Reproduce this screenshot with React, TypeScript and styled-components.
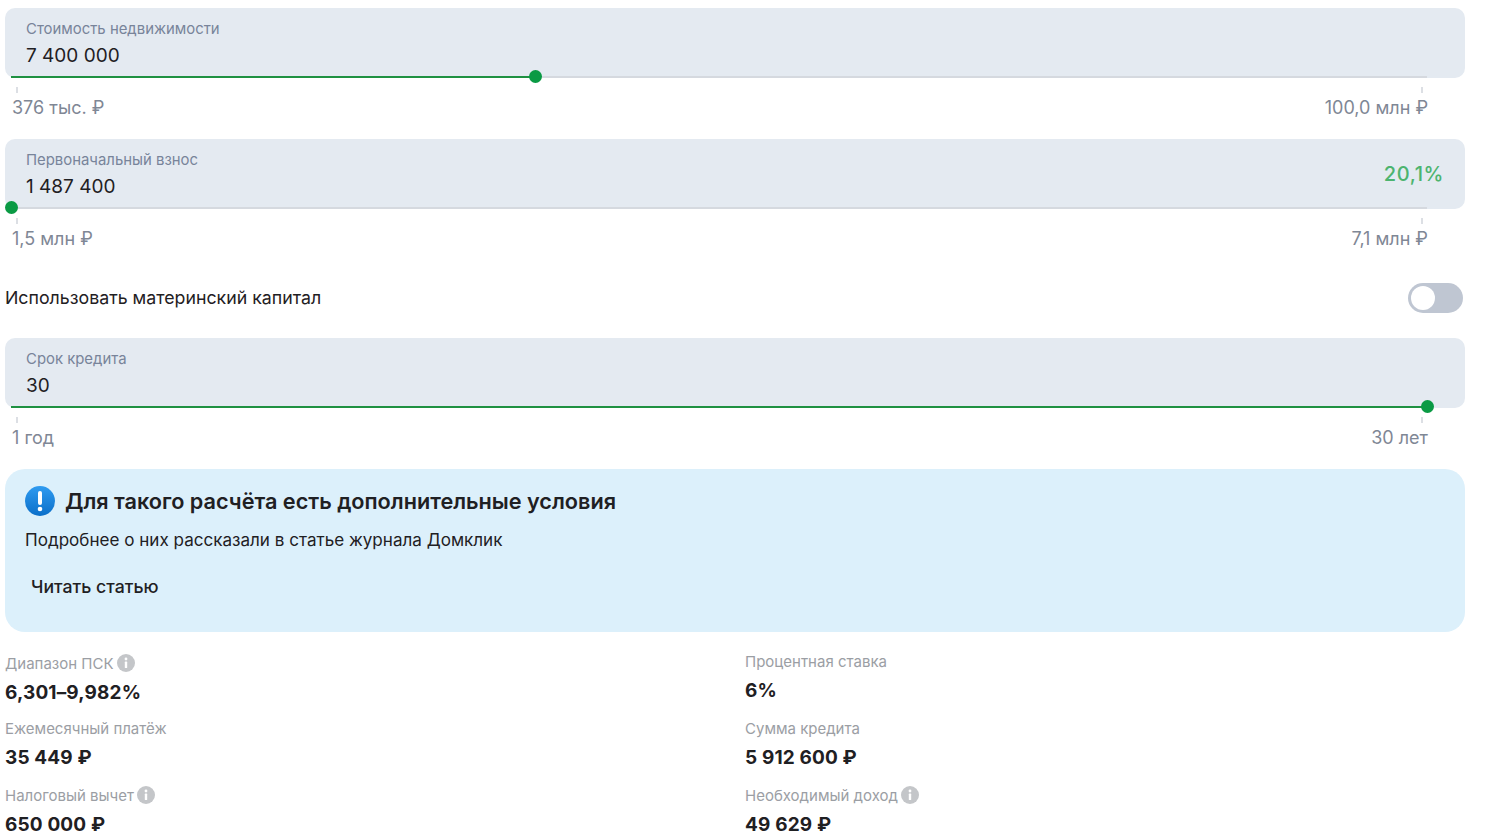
import React from "react";
import styled, { createGlobalStyle } from "styled-components";

const Global = createGlobalStyle`
  html, body { margin: 0; padding: 0; background: #fff; height: 840px; overflow: hidden; }
  body { font-family: Inter, "Noto Sans", sans-serif; color: #1f2023; }
`;

const Page = styled.div`
  width: 1460px;
  padding: 8px 0 0 5px;
  display: flex;
  flex-direction: column;
`;

const SliderBlock = styled.div`
  height: 131px;
  display: flex;
  flex-direction: column;
`;

const Field = styled.div`
  position: relative;
  height: 70px;
  box-sizing: border-box;
  padding: 12px 21px 0;
  background: #e4eaf1;
  border-radius: 10px;
  display: flex;
  justify-content: space-between;
`;

const FieldText = styled.div`
  display: flex;
  flex-direction: column;
`;

const FieldLabel = styled.div`
  font-size: 14.9px;
  line-height: 18px;
  color: #78849a;
`;

const FieldValue = styled.div`
  font-size: 19px;
  line-height: 26px;
  margin-top: 5px;
  color: #1f2023;
`;

const Percent = styled.div`
  align-self: center;
  margin-top: -12px;
  font-size: 20px;
  font-weight: 500;
  letter-spacing: 0.6px;
  color: #4cb46f;
`;

const Track = styled.div`
  position: absolute;
  left: 6px;
  width: 1416px;
  bottom: 0;
  height: 2px;
  background: #d5d9df;
`;

const TrackFill = styled.div`
  height: 100%;
  background: #1f9142;
`;

const Thumb = styled.div`
  position: absolute;
  top: -6.5px;
  width: 13px;
  height: 13px;
  margin-left: -6.5px;
  box-sizing: border-box;
  border-radius: 50%;
  background: #0a9a44;
`;

const Scale = styled.div`
  width: 1423px;
  margin-top: 9px;
  padding-left: 7px;
  box-sizing: border-box;
  display: flex;
  justify-content: space-between;
`;

const ScaleMark = styled.div<{ $end?: boolean }>`
  display: flex;
  flex-direction: column;
  align-items: ${(p) => (p.$end ? "flex-end" : "flex-start")};
`;

const Tick = styled.div<{ $end?: boolean }>`
  width: 2px;
  height: 6px;
  background: #dcdfe4;
  margin: ${(p) => (p.$end ? "0 5px 0 0" : "0 0 0 4px")};
`;

const ScaleText = styled.div`
  margin-top: 4px;
  font-size: 18px;
  line-height: 22px;
  color: #7f8795;
`;

const ToggleRow = styled.div`
  height: 68px;
  padding: 0 2px 0 0;
  display: flex;
  align-items: flex-start;
  justify-content: space-between;
`;

const ToggleLabel = styled.div`
  margin-top: 17px;
  font-size: 17.75px;
  line-height: 22px;
  color: #1f2023;
`;

const Toggle = styled.div`
  margin-top: 13px;
  width: 55px;
  height: 30px;
  box-sizing: border-box;
  padding: 3px;
  border-radius: 15px;
  background: #bfc6d2;
`;

const Knob = styled.div`
  width: 24px;
  height: 24px;
  border-radius: 50%;
  background: #fff;
`;

const Banner = styled.div`
  height: 163px;
  box-sizing: border-box;
  padding: 16px 20px 0;
  background: #dcf0fb;
  border-radius: 20px;
  display: flex;
  flex-direction: column;
`;

const BannerHead = styled.div`
  display: flex;
  align-items: center;
  gap: 10px;
  height: 32px;
`;

const BannerTitle = styled.div`
  font-size: 21.65px;
  font-weight: 600;
  line-height: 30px;
  color: #1f2023;
`;

const BannerText = styled.div`
  margin-top: 11px;
  font-size: 17.07px;
  line-height: 24px;
  color: #1f2023;
`;

const BannerLink = styled.div`
  margin: 23px 0 0 6px;
  font-size: 17.7px;
  line-height: 24px;
  font-weight: 500;
  color: #1f2023;
`;

const Stats = styled.div`
  margin-top: 19px;
  display: grid;
  grid-template-columns: 740px 1fr;
  grid-auto-rows: 67px;
`;

const Stat = styled.div<{ $shift?: boolean }>`
  display: flex;
  flex-direction: column;
  padding-top: ${(p) => (p.$shift ? 2 : 0)}px;
`;

const StatLabel = styled.div`
  display: flex;
  align-items: center;
  gap: 3px;
  height: 20px;
  font-size: 15px;
  color: #9b9ea4;
`;

const StatValue = styled.div`
  margin-top: 7px;
  font-size: 19px;
  line-height: 26px;
  font-weight: 700;
  letter-spacing: 0.15px;
  color: #1f2023;
`;

const Info = () => (
  <svg width="18" height="18" viewBox="0 0 18 18" aria-hidden="true">
    <circle cx="9" cy="9" r="9" fill="#c4c6c9" />
    <circle cx="9" cy="5" r="1.4" fill="#fff" />
    <rect x="7.8" y="7.6" width="2.4" height="6.4" rx="0.6" fill="#fff" />
  </svg>
);

const Alert = () => (
  <svg width="30" height="30" viewBox="0 0 30 30" aria-hidden="true">
    <defs>
      <linearGradient id="alertFill" x1="0" y1="0" x2="0" y2="1">
        <stop offset="0" stopColor="#2f9bf0" />
        <stop offset="1" stopColor="#0b6fc9" />
      </linearGradient>
    </defs>
    <circle cx="15" cy="15" r="15" fill="url(#alertFill)" />
    <rect x="13" y="5" width="4" height="14" rx="2" fill="#fff" />
    <circle cx="15" cy="23" r="2.3" fill="#fff" />
  </svg>
);

type SliderProps = {
  label: string;
  value: string;
  min: string;
  max: string;
  pct: number;
  extra?: string;
};

const Slider = ({ label, value, min, max, pct, extra }: SliderProps) => (
  <SliderBlock>
    <Field>
      <FieldText>
        <FieldLabel>{label}</FieldLabel>
        <FieldValue>{value}</FieldValue>
      </FieldText>
      {extra && <Percent>{extra}</Percent>}
      <Track>
        <TrackFill style={{ width: `${pct}%` }} />
        <Thumb style={{ left: `${pct}%` }} />
      </Track>
    </Field>
    <Scale>
      <ScaleMark>
        <Tick />
        <ScaleText>{min}</ScaleText>
      </ScaleMark>
      <ScaleMark $end>
        <Tick $end />
        <ScaleText>{max}</ScaleText>
      </ScaleMark>
    </Scale>
  </SliderBlock>
);

const stats = [
  { label: "Диапазон ПСК", value: "6,301–9,982%", info: true, shift: true },
  { label: "Процентная ставка", value: "6%" },
  { label: "Ежемесячный платёж", value: "35 449 ₽" },
  { label: "Сумма кредита", value: "5 912 600 ₽" },
  { label: "Налоговый вычет", value: "650 000 ₽", info: true },
  { label: "Необходимый доход", value: "49 629 ₽", info: true },
];

export default function App() {
  return (
    <Page>
      <Global />
      <Slider label="Стоимость недвижимости" value="7 400 000" min="376 тыс. ₽" max="100,0 млн ₽" pct={37.05} />
      <Slider label="Первоначальный взнос" value="1 487 400" min="1,5 млн ₽" max="7,1 млн ₽" pct={0} extra="20,1%" />
      <ToggleRow>
        <ToggleLabel>Использовать материнский капитал</ToggleLabel>
        <Toggle>
          <Knob />
        </Toggle>
      </ToggleRow>
      <Slider label="Срок кредита" value="30" min="1 год" max="30 лет" pct={100} />
      <Banner>
        <BannerHead>
          <Alert />
          <BannerTitle>Для такого расчёта есть дополнительные условия</BannerTitle>
        </BannerHead>
        <BannerText>Подробнее о них рассказали в статье журнала Домклик</BannerText>
        <BannerLink>Читать статью</BannerLink>
      </Banner>
      <Stats>
        {stats.map((s) => (
          <Stat key={s.label} $shift={s.shift}>
            <StatLabel>
              {s.label}
              {s.info && <Info />}
            </StatLabel>
            <StatValue>{s.value}</StatValue>
          </Stat>
        ))}
      </Stats>
    </Page>
  );
}
